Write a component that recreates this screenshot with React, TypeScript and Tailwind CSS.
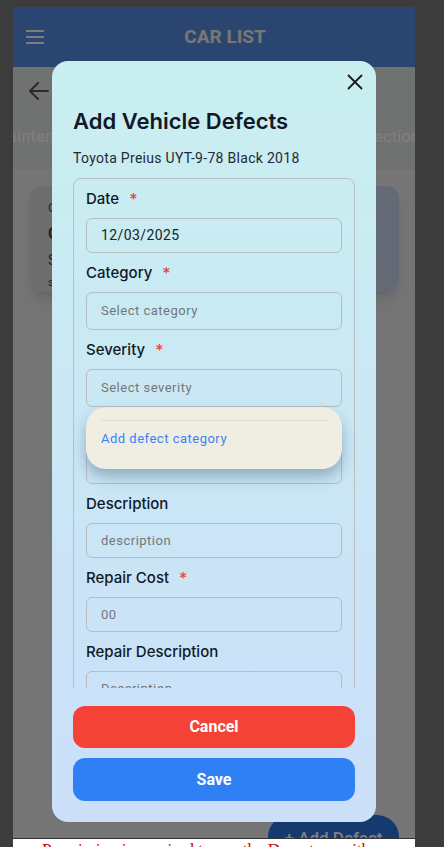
const Hamburger = () => (
  <svg width="18" height="14" viewBox="0 0 18 14" fill="none">
    <path d="M0 1H18M0 7H18M0 13H18" stroke="#fafafa" strokeWidth="2" />
  </svg>
);

const BackArrow = () => (
  <svg width="20" height="18" viewBox="0 0 20 18" fill="none">
    <path d="M19 9H2M9 1L1 9L9 17" stroke="#555" strokeWidth="2" strokeLinecap="round" strokeLinejoin="round" />
  </svg>
);

const CloseIcon = () => (
  <svg width="16" height="16" viewBox="0 0 16 16" fill="none">
    <path d="M1.5 1.5L14.5 14.5M14.5 1.5L1.5 14.5" stroke="#1a1a1a" strokeWidth="1.8" strokeLinecap="round" />
  </svg>
);

const Label = ({ text, required }: { text: string; required?: boolean }) => (
  <div className="flex h-5 items-center font-['Inter',sans-serif] text-[15px] font-medium text-[#111827]">
    {text}
    {required && <span className="ml-[10px] text-[16px] text-[#ef4444]">*</span>}
  </div>
);

const Field = ({
  label,
  required,
  value,
  placeholder,
  tall,
}: {
  label: string;
  required?: boolean;
  value?: string;
  placeholder?: string;
  tall?: boolean;
}) => (
  <div className="flex flex-col gap-[9px]">
    <Label text={label} required={required} />
    <div
      className={
        "flex items-center rounded-[6px] border border-[#b7bcc0] pl-[14px] font-['Roboto',sans-serif] text-[13px] tracking-[0.5px] " +
        (tall ? "h-[38px]" : "h-[35px]")
      }
    >
      {value ? (
        <span className="text-[14px] tracking-[0.4px] text-[#1f2023]">{value}</span>
      ) : (
        <span className="text-[#74777a]">{placeholder}</span>
      )}
    </div>
  </div>
);

export default function App() {
  return (
    <div className="flex h-[847px] w-[444px] flex-col overflow-hidden bg-[#3c3c3c] font-['Roboto',sans-serif]">
      <div className="ml-[13px] mt-[7px] flex w-[402px] flex-col">
        <div className="relative h-[831px] overflow-hidden bg-[#eaeaea]">
          {/* header */}
          <div className="flex h-[60px] items-center bg-[#548ce0] px-[13px]">
            <Hamburger />
            <div className="ml-[4px] flex-1 text-center text-[19px] font-bold text-[#eeeeee]">CAR LIST</div>
          </div>

          {/* back + tabs */}
          <div className="flex h-[103px] flex-col bg-[#e0e4e4]">
            <div className="flex h-[48px] items-center pl-[16px]">
              <BackArrow />
            </div>
            <div className="-ml-[19px] mt-[10px] flex w-[426px] justify-between text-[16px] tracking-[0.3px] text-white">
              <span>Maintenance</span>
              <span>Defects</span>
              <span>Inspection</span>
            </div>
          </div>

          {/* card */}
          <div className="mx-[16px] mt-[16px] flex h-[106px] flex-col gap-[4px] rounded-[12px] bg-gradient-to-r from-[#dcdcdc] via-[#dcdcdc] to-[#c6d4ee] px-[19px] py-[12px] text-[#444] shadow-lg">
            <span className="text-[13px]">Created 12/03/2025</span>
            <span className="text-[16px] font-bold">Cracked windshield</span>
            <span className="text-[14px]">Severity: High</span>
            <span className="text-[11px]">status: open</span>
          </div>

          {/* floating add button */}
          <div className="absolute right-[16px] top-[808px] flex h-[48px] w-[131px] items-center justify-center rounded-[22px] bg-[#2c74e0] text-[17px] font-medium text-white">
            + Add Defect
          </div>

          {/* overlay + modal */}
          <div className="absolute inset-0 flex justify-center bg-black/50 pt-[54px]">
            <div className="flex h-[761px] w-[324px] flex-col rounded-[16px] bg-gradient-to-b from-[#c9eff0] to-[#cbdff9] px-[21px] pb-[21px] pt-[10px]">
              <div className="-mr-[11px] flex justify-end">
                <div className="flex h-[22px] w-[22px] items-center justify-center">
                  <CloseIcon />
                </div>
              </div>
              <div className="mt-[14px] font-['Inter',sans-serif] text-[22px] font-semibold leading-[28px] text-[#111827]">
                Add Vehicle Defects
              </div>
              <div className="mt-[13px] text-[14px] leading-[20px] tracking-[0.3px] text-[#1f2937]">
                Toyota Preius UYT-9-78 Black 2018
              </div>

              <div className="mt-[10px] h-[510px] overflow-hidden">
                <div className="relative flex flex-col gap-[10px] rounded-[8px] border border-[#b8bec2] px-[12px] pb-[20px] pt-[10px]">
                  <Field label="Date" required value="12/03/2025" />
                  <Field label="Category" required placeholder="Select category" tall />
                  <Field label="Severity" required placeholder="Select severity" tall />
                  <Field label="Status" required placeholder="Select status" tall />
                  <Field label="Description" placeholder="description" />
                  <Field label="Repair Cost" required placeholder="00" />
                  <Field label="Repair Description" placeholder="Description" />

                  {/* dropdown popover */}
                  <div className="absolute left-[12px] right-[12px] top-[228px] h-[62px] rounded-[20px] bg-[#f0ede3] px-[15px] pt-[13px] shadow-[0_8px_14px_rgba(40,70,100,0.35)]">
                    <div className="h-px bg-[#dedbd2]" />
                    <div className="mt-[8px] text-[13px] tracking-[0.5px] text-[#3b82f6]">Add defect category</div>
                  </div>
                </div>
              </div>

              <div className="mt-[18px] flex flex-col gap-[10px]">
                <button className="h-[42px] rounded-[12px] bg-[#f44336] text-[16px] font-bold text-white">Cancel</button>
                <button className="h-[43px] rounded-[12px] bg-[#2f80f5] text-[16px] font-bold text-white">Save</button>
              </div>
            </div>
          </div>
        </div>
        <div className="h-[9px] overflow-hidden border-t border-[#333] bg-white pl-[29px] font-['Liberation_Serif',serif] text-[17px] leading-[22px] text-[#cc0000]">
          Permission is required to use the Departure with your selection
        </div>
      </div>
    </div>
  );
}
